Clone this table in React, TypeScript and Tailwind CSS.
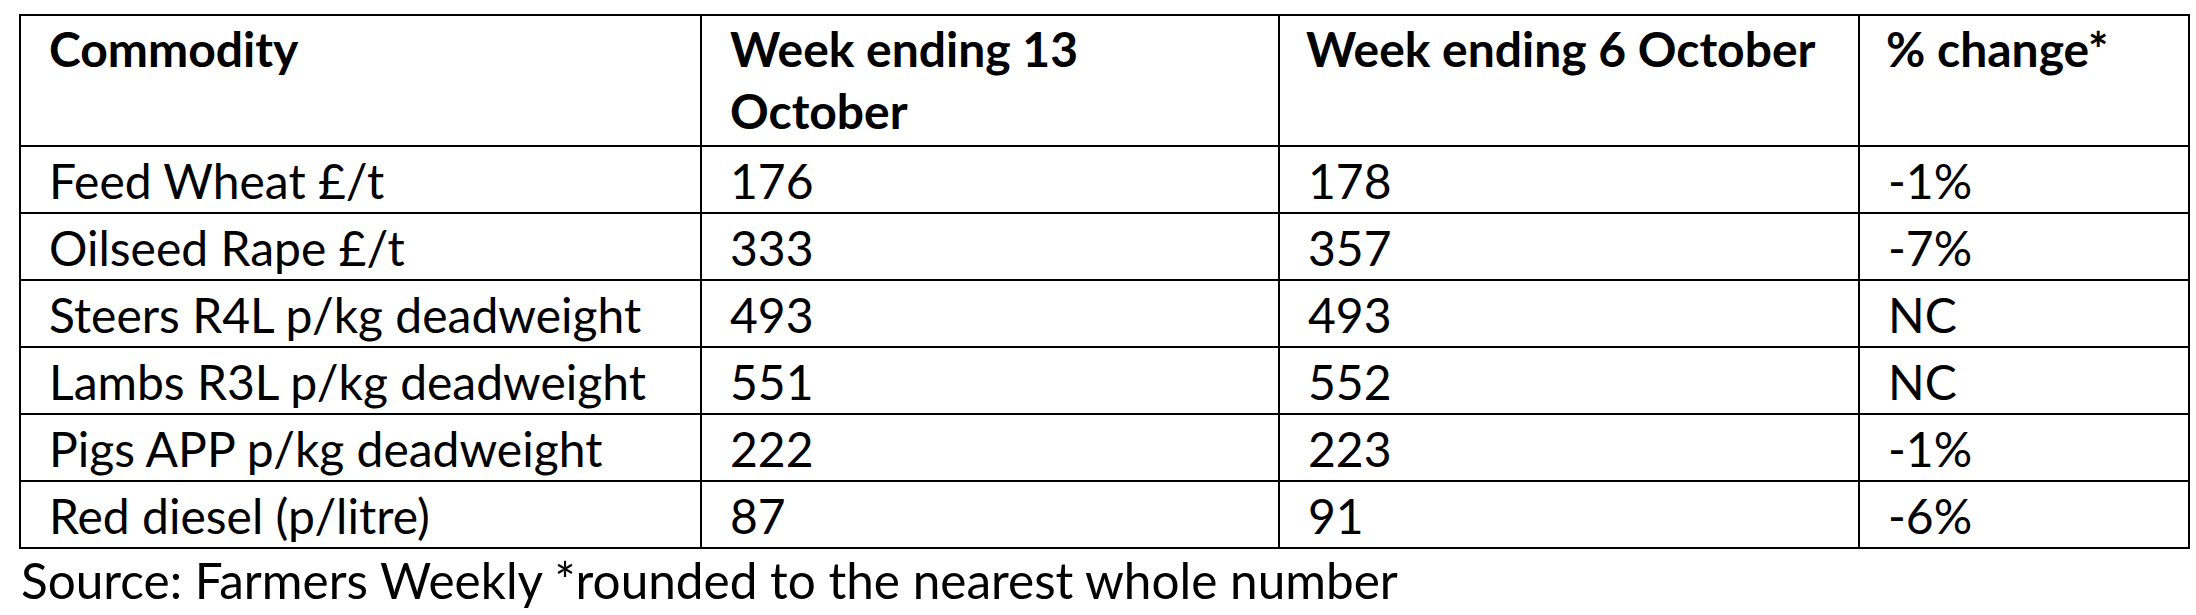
const rows: [string, string, string, string][] = [
    ["Feed Wheat £/t", "176", "178", "-1%"],
    ["Oilseed Rape £/t", "333", "357", "-7%"],
    ["Steers R4L p/kg deadweight", "493", "493", "NC"],
    ["Lambs R3L p/kg deadweight", "551", "552", "NC"],
    ["Pigs APP p/kg deadweight", "222", "223", "-1%"],
    ["Red diesel (p/litre)", "87", "91", "-6%"],
];

export default function App() {
    return (
        <div className="min-h-screen w-[2196px] bg-white pl-[19px] pt-[14px] text-black font-['Lato','Liberation_Sans',sans-serif] text-[48px] leading-[62px]">
            <table className="w-[2169px] table-fixed border-collapse border-2 border-black">
                <colgroup>
                    <col className="w-[681px]" />
                    <col className="w-[578px]" />
                    <col className="w-[580px]" />
                    <col className="w-[330px]" />
                </colgroup>
                <thead>
                <tr className="h-[131px]">
                    <th className="border-2 border-black px-[28px] pt-[2px] text-left align-top font-bold">Commodity</th>
                    <th className="border-2 border-black px-[28px] pt-[2px] text-left align-top font-bold">
                        Week ending 13 October
                    </th>
                    <th className="border-2 border-black pl-[26px] pt-[2px] text-left align-top font-bold whitespace-nowrap">
                        Week ending 6 October
                    </th>
                    <th className="border-2 border-black px-[26px] pt-[2px] text-left align-top font-bold">% change*</th>
                </tr>
                </thead>
                <tbody>
                {rows.map((row, i) => (
                    <tr key={i} className="h-[67px]">
                        {row.map((cell, j) => (
                            <td key={j} className="border-2 border-black px-[28px] pt-[3px] align-middle whitespace-nowrap">
                                {cell}
                            </td>
                        ))}
                    </tr>
                ))}
                </tbody>
            </table>
            <p className="pl-[2px] text-[49.5px]">Source: Farmers Weekly *rounded to the nearest whole number</p>
        </div>
    );
}
